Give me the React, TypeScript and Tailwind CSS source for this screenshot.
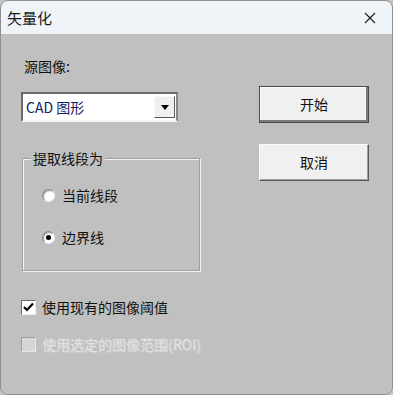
const FONT = "font-['Noto_Sans_CJK_SC','Noto_Sans',sans-serif]";

// ── Title bar ──────────────────────────────────────────────────────────────

function TitleBar() {
  return (
    <div className="h-[33px] bg-[#eff4f9] flex items-center justify-between pl-[6px] pr-[16px]">
      <span className="text-[15px] leading-[20px] text-[#1a1a1a]">矢量化</span>
      <svg width="12" height="12" viewBox="0 0 12 12" className="text-[#1a1a1a]">
        <path d="M1 1 L11 11 M11 1 L1 11" stroke="currentColor" strokeWidth="1.1" fill="none" />
      </svg>
    </div>
  );
}

// ── Controls ───────────────────────────────────────────────────────────────

function ComboBox() {
  return (
    <div className="mt-[16px] h-[30px] w-[157px] flex border-2 border-t-[#6b6b6b] border-l-[#6b6b6b] border-r-[#8a8a8a] border-b-[#f4f4f4] bg-white">
      <span className="flex-1 pl-[3px] text-[14px] leading-[26px] text-[#10205a]">CAD 图形</span>
      <div className="w-[21px] h-[22px] mt-[2px] mr-[1px] bg-[#f0f0f0] border border-t-[#fafafa] border-l-[#fafafa] border-r-[#5a5a5a] border-b-[#5a5a5a] flex items-center justify-center">
        <svg width="8" height="5" viewBox="0 0 8 5">
          <path d="M0 0 H8 L4 5 Z" fill="#000" />
        </svg>
      </div>
    </div>
  );
}

function Radio({ checked, label, top }: { checked?: boolean; label: string; top: string }) {
  return (
    <div className={`flex items-center h-[20px] pl-[19px] ${top}`}>
      <span className="w-[13px] h-[13px] rounded-full bg-white border border-t-[#8a8a8a] border-l-[#8a8a8a] border-r-[#f0f0f0] border-b-[#f0f0f0] shadow-[inset_1px_1px_1px_#9a9a9a] flex items-center justify-center">
        {checked && <span className="w-[5px] h-[5px] rounded-full bg-black" />}
      </span>
      <span className="ml-[7px] text-[14px] leading-[20px] text-[#111]">{label}</span>
    </div>
  );
}

function GroupBox() {
  return (
    <div className="relative mt-[36px] ml-[1px] w-[178px] h-[113px] border border-[#a0a0a0] shadow-[inset_1px_1px_0_#f4f4f4,1px_1px_0_#f4f4f4]">
      <span className="absolute left-[8px] top-[-11px] px-[2px] bg-[#c0c0c0] text-[14px] leading-[20px] text-[#111]">
        提取线段为
      </span>
      <Radio label="当前线段" top="mt-[26px]" />
      <Radio label="边界线" checked top="mt-[22px]" />
    </div>
  );
}

function CheckBox({ checked, disabled, label, top }: { checked?: boolean; disabled?: boolean; label: string; top: string }) {
  return (
    <div className={`flex items-center h-[20px] ${top}`}>
      <span
        className={`w-[15px] h-[15px] flex items-center justify-center border ${
          disabled
            ? 'bg-[#d6d6d6] border-t-[#9e9e9e] border-l-[#9e9e9e] border-r-[#e6e6e6] border-b-[#e6e6e6]'
            : 'bg-white border-t-[#6b6b6b] border-l-[#6b6b6b] border-r-[#f0f0f0] border-b-[#f0f0f0]'
        }`}
      >
        {checked && (
          <svg width="11" height="10" viewBox="0 0 11 10">
            <path d="M1 5 L4 8 L10 1.5" stroke="#000" strokeWidth="2.2" fill="none" />
          </svg>
        )}
      </span>
      <span
        className={`ml-[6px] text-[14px] leading-[20px] ${
          disabled ? 'text-[#e2e2e2] [text-shadow:1px_1px_0_#cfcfcf]' : 'text-[#111]'
        }`}
      >
        {label}
      </span>
    </div>
  );
}

function Button({ label, isDefault, top }: { label: string; isDefault?: boolean; top: string }) {
  return (
    <div
      className={`w-[110px] h-[37px] bg-[#f0f0f0] flex items-center justify-center text-[14px] text-[#111] ${top} ${
        isDefault
          ? 'border border-[#4a4a4a] shadow-[inset_-2px_-2px_0_#7a7a7a,inset_1px_1px_0_#ffffff]'
          : 'border border-t-[#fbfbfb] border-l-[#fbfbfb] border-r-[#5a5a5a] border-b-[#5a5a5a] shadow-[inset_-1px_-1px_0_#a0a0a0]'
      }`}
    >
      {label}
    </div>
  );
}

// ── Page ───────────────────────────────────────────────────────────────────

export default function App() {
  return (
    <div className={`w-[393px] h-[395px] bg-[#c4c4c4] ${FONT}`}>
      <div className="w-full h-full rounded-[8px] border border-[#8e8e8e] overflow-hidden flex flex-col">
        <TitleBar />
        <div className="flex-1 bg-[#c0c0c0] flex pl-[20px]">
          <div className="w-[180px] pt-[22px]">
            <div className="h-[20px] pl-[3px] text-[14px] leading-[20px] text-[#111]">源图像:</div>
            <ComboBox />
            <GroupBox />
            <CheckBox checked label="使用现有的图像阈值" top="mt-[26px]" />
            <CheckBox disabled label="使用选定的图像范围(ROI)" top="mt-[17px]" />
          </div>
          <div className="ml-[58px] pt-[52px]">
            <Button label="开始" isDefault top="" />
            <Button label="取消" top="mt-[21px]" />
          </div>
        </div>
      </div>
    </div>
  );
}
